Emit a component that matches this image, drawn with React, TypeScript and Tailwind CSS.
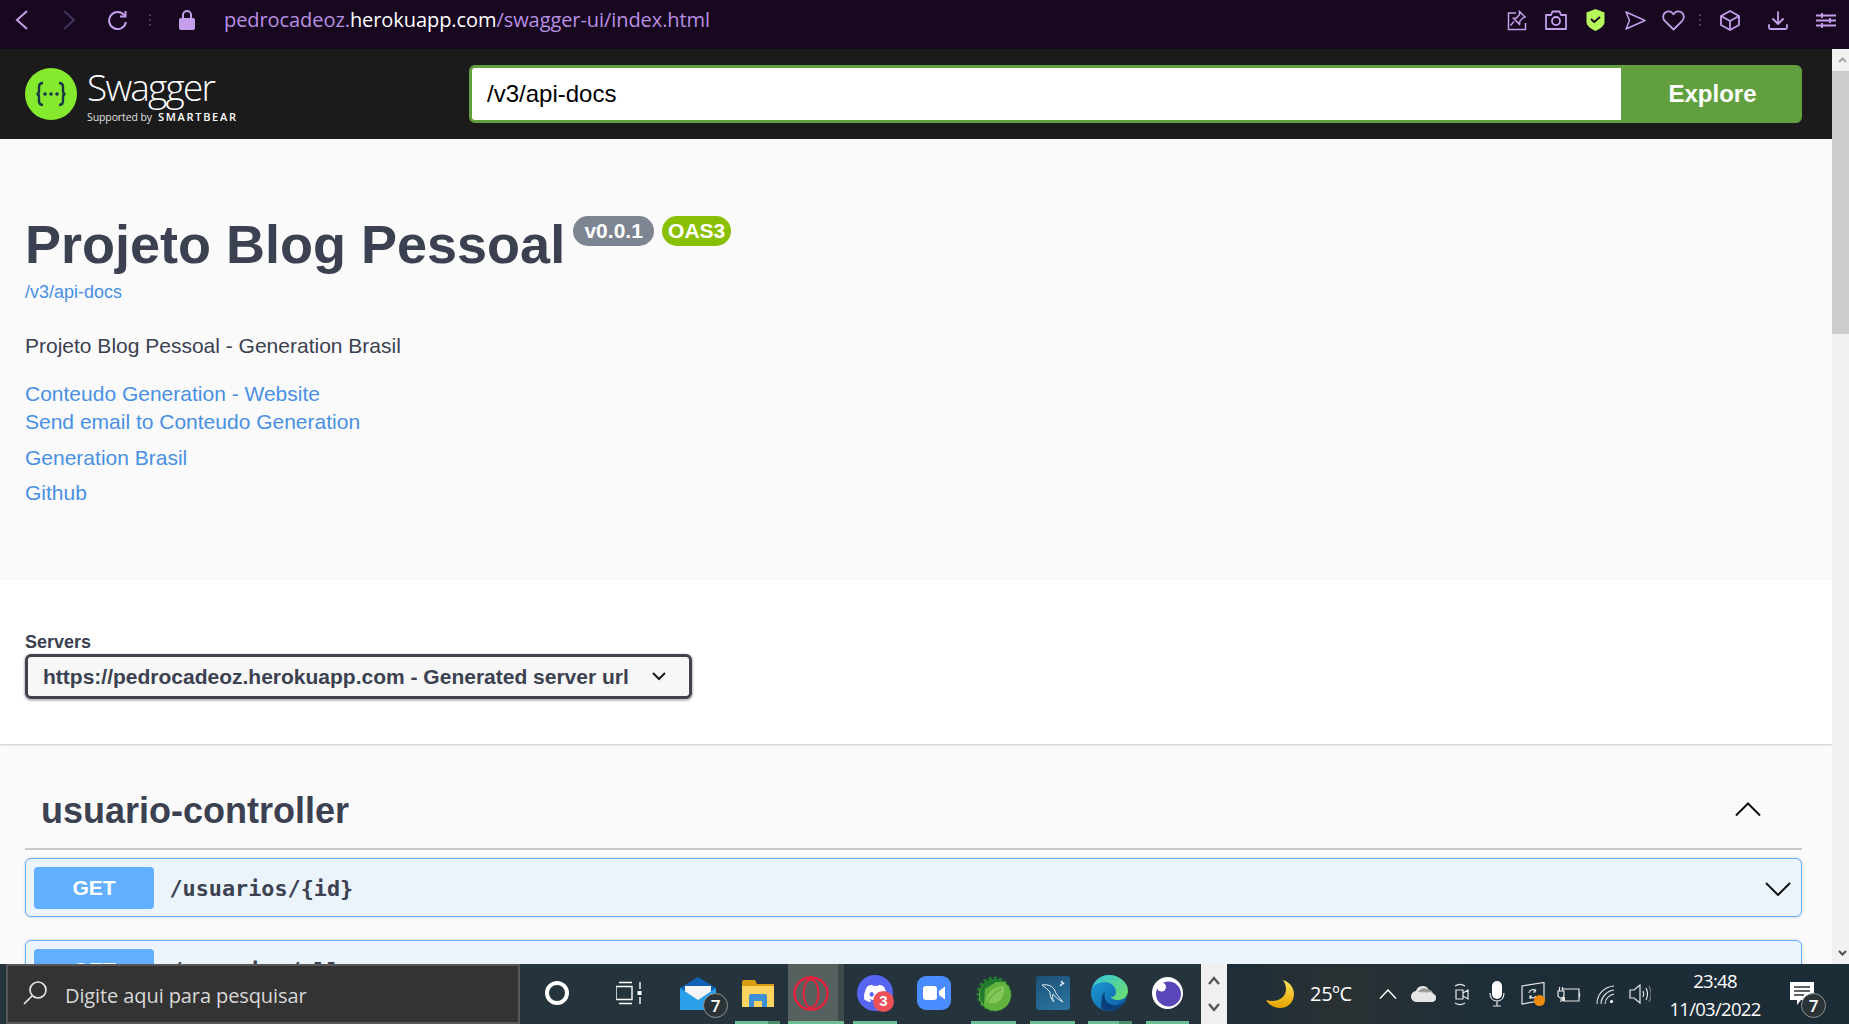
import React from "react";
import { FaDiscord } from "react-icons/fa";

const P = "#c59fec";

function Slot({ w, bar, dark, children, cls = "" }: { w: string; bar?: boolean; dark?: string; children?: React.ReactNode; cls?: string }) {
  return (
    <div className={`relative h-full flex items-center justify-center shrink-0 ${w} ${cls}`}>
      {children}
      {bar && (
        <div className="absolute bottom-0 left-0 right-0 h-[3px] flex bg-[#6fbd95]">
          <div className="flex-1" />
          {dark && <div className={`${dark} bg-[#4f8f70]`} />}
        </div>
      )}
    </div>
  );
}

function CountBadge({ n }: { n: string }) {
  return (
    <div className="absolute w-[25px] h-[25px] rounded-full bg-[#2b3336] border border-[#8d9496] text-white flex items-center justify-center text-[17px] font-['Open_Sans',sans-serif] font-semibold">
      {n}
    </div>
  );
}

function Pin() {
  return (
    <svg width="20" height="21" viewBox="0 0 20 21" fill="none" stroke={P} strokeWidth="1.5">
      <path d="M9 3H1.500v16.500h17V13" />
      <path d="M12.500 1.500l5.500 5.500-2 .8-3.200 3.500-.3 3-6-6 3-.3 3-3.500z" />
      <path d="M7 11.500l-3.500 4" />
    </svg>
  );
}
function Camera() {
  return (
    <svg width="22" height="20" viewBox="0 0 22 20" fill="none" stroke={P} strokeWidth="1.8" strokeLinejoin="round">
      <path d="M1 5h5l1.500-3.500h7L16 5h5v14H1z" />
      <circle cx="11" cy="11" r="4" />
    </svg>
  );
}
function Shield() {
  return (
    <svg width="19" height="22" viewBox="0 0 19 22">
      <path d="M9.500 0L18.500 3.500V13C18.500 17 13 20.500 9.500 22 6 20.500.5 17 .5 13V3.500z" fill="#b7f75e" />
      <path d="M5 10l3.200 3 5.800-5" fill="none" stroke="#17071f" strokeWidth="2" />
    </svg>
  );
}
function Send() {
  return (
    <svg width="21" height="19" viewBox="0 0 21 19" fill="none" stroke={P} strokeWidth="1.5" strokeLinejoin="round">
      <path d="M1 1l19 8.500L1 18l3.500-8.500z" />
    </svg>
  );
}
function Heart() {
  return (
    <svg width="23" height="21" viewBox="0 0 23 21" fill="none" stroke={P} strokeWidth="1.8" strokeLinejoin="round">
      <path d="M11.500 19.500L3 11.200C.5 8.700.6 4.700 3 2.700 5.500.6 9.200 1 11.500 4.300 13.800 1 17.500.6 20 2.700c2.400 2 2.500 6 0 8.500z" />
    </svg>
  );
}
function Cube() {
  return (
    <svg width="20" height="21" viewBox="0 0 20 21" fill="none" stroke={P} strokeWidth="1.8" strokeLinejoin="round">
      <path d="M10 1l9 5v9l-9 5-9-5V6z" />
      <path d="M1 6l9 5 9-5M10 11v9" />
    </svg>
  );
}
function Download() {
  return (
    <svg width="20" height="19" viewBox="0 0 20 19" fill="none" stroke={P} strokeWidth="1.8" strokeLinecap="round" strokeLinejoin="round">
      <path d="M10 1v11M5 8l5 5 5-5" />
      <path d="M1 14v2.500c0 1 .6 1.500 1.500 1.500h15c.9 0 1.500-.5 1.500-1.500V14" />
    </svg>
  );
}
function Sliders() {
  return (
    <svg width="20" height="17" viewBox="0 0 20 17" fill="none" stroke={P} strokeWidth="1.8">
      <path d="M0 3.500h20M0 8.500h20M0 13.500h20" />
      <path d="M6 1v5M14 6v5M6 11v5" />
    </svg>
  );
}
function Dots({ color }: { color: string }) {
  return (
    <div className="flex flex-col gap-[3px]">
      {[0, 1, 2].map((i) => (
        <div key={i} className={`w-[2px] h-[2px] ${color}`} />
      ))}
    </div>
  );
}

function BrowserBar() {
  return (
    <div className="h-[49px] shrink-0 bg-[#17071f] flex items-center pb-[9px]">
      <svg className="ml-[15px]" width="14" height="20" viewBox="0 0 14 20" fill="none" stroke={P} strokeWidth="2"><path d="M12 1L2 10l10 9" /></svg>
      <svg className="ml-[33px]" width="14" height="20" viewBox="0 0 14 20" fill="none" stroke="#45355f" strokeWidth="2"><path d="M2 1l10 9-10 9" /></svg>
      <svg className="ml-[31px]" width="21" height="21" viewBox="0 0 21 21" fill="none" stroke={P} strokeWidth="2">
        <path d="M17.500 5.500A8.500 8.500 0 1 0 19 12" />
        <path d="M18.500 1v5.500H13" />
      </svg>
      <div className="ml-[21px]"><Dots color="bg-[#4a3b57]" /></div>
      <svg className="ml-[28px]" width="16" height="20" viewBox="0 0 16 20">
        <rect x="0" y="8" width="16" height="12" rx="2" fill={P} />
        <path d="M4 9V5a4 4 0 0 1 8 0v4" fill="none" stroke={P} strokeWidth="2" />
      </svg>
      <div className="ml-[29px] text-[20px] font-['Open_Sans',sans-serif] text-[#b98fe3] whitespace-nowrap tracking-[-0.07px]">
        pedrocadeoz.<span className="text-white">herokuapp.com</span>/swagger-ui/index.html
      </div>
      <div className="flex-1" />
      <Pin />
      <div className="ml-[18px]"><Camera /></div>
      <div className="ml-[19px]"><Shield /></div>
      <div className="ml-[20px]"><Send /></div>
      <div className="ml-[16px]"><Heart /></div>
      <div className="ml-[14px]"><Dots color="bg-[#4a3b57]" /></div>
      <div className="ml-[19px]"><Cube /></div>
      <div className="ml-[28px]"><Download /></div>
      <div className="ml-[28px] mr-[13px]"><Sliders /></div>
    </div>
  );
}

function SwaggerHeader() {
  return (
    <div className="h-[90px] shrink-0 bg-[#1b1b1b] flex items-center pl-[25px] pr-[30px]">
      <div className="w-[444px] shrink-0 flex items-center">
        <svg width="52" height="52" viewBox="0 0 52 52">
          <circle cx="26" cy="26" r="26" fill="#85ea2d" />
          <path d="M18 15c-3 0-4 1.500-4 4v4c0 2-1 3-2.500 3 1.500 0 2.500 1 2.500 3v4c0 2.500 1 4 4 4" fill="none" stroke="#173647" strokeWidth="2.400" />
          <path d="M34 15c3 0 4 1.500 4 4v4c0 2 1 3 2.500 3-1.500 0-2.500 1-2.500 3v4c0 2.500-1 4-4 4" fill="none" stroke="#173647" strokeWidth="2.400" />
          <circle cx="20" cy="26" r="1.800" fill="#173647" />
          <circle cx="26" cy="26" r="1.800" fill="#173647" />
          <circle cx="32" cy="26" r="1.800" fill="#173647" />
        </svg>
        <div className="ml-[10px] flex flex-col text-white font-['Open_Sans',sans-serif]">
          <div className="text-[37px] leading-[38px] font-light tracking-[-1.8px] mt-[3px]">Swagger</div>
          <div className="flex items-baseline mt-[5px] leading-[12px]">
            <span className="text-[10.500px] tracking-[-0.1px] text-[#e0e0e0]">Supported by</span>
            <span className="ml-[6px] text-[11px] font-semibold tracking-[1.700px]">SMARTBEAR</span>
          </div>
        </div>
      </div>
      <div className="flex-1 h-[58px] flex border-[3px] border-[#62a03f] rounded-[6px] bg-[#62a03f] font-['Liberation_Sans',sans-serif]">
        <div className="flex-1 bg-white rounded-l-[3px] flex items-center pl-[15px] text-[24px] text-black">/v3/api-docs</div>
        <div className="w-[178px] flex items-center justify-center pl-[5px] text-white text-[24px] font-bold">Explore</div>
      </div>
    </div>
  );
}

function Info() {
  const link = "text-[21px] leading-[28px] text-[#4990e2]";
  return (
    <div className="h-[441px] bg-[#fafafa] pl-[25px] pt-[74px] text-[#3b4151]">
      <div className="flex items-start">
        <div className="text-[54px] leading-[62px] font-bold whitespace-nowrap">Projeto Blog Pessoal</div>
        <div className="ml-[8px] mt-[3px] h-[30px] w-[81px] rounded-full bg-[#7d8492] text-white text-[21px] font-bold flex items-center justify-center">v0.0.1</div>
        <div className="ml-[8px] mt-[3px] h-[30px] w-[69px] rounded-full bg-[#89bf04] text-white text-[21px] font-bold flex items-center justify-center">OAS3</div>
      </div>
      <div className="mt-[5px] text-[18px] leading-[24px] text-[#4990e2]">/v3/api-docs</div>
      <div className="mt-[28px] text-[21px] leading-[28px]">Projeto Blog Pessoal - Generation Brasil</div>
      <div className={`mt-[20px] ${link}`}>Conteudo Generation - Website</div>
      <div className={link}>Send email to Conteudo Generation</div>
      <div className={`mt-[8px] ${link}`}>Generation Brasil</div>
      <div className={`mt-[7px] ${link}`}>Github</div>
    </div>
  );
}

function Servers() {
  return (
    <div className="h-[164px] shrink-0 bg-white pl-[25px] pt-[50px] shadow-[0_1px_2px_rgba(0,0,0,0.2)] relative text-[#3b4151]">
      <div className="text-[18px] leading-[24px] font-bold">Servers</div>
      <div className="w-[667px] h-[45px] border-[3px] border-[#41444e] rounded-[6px] bg-[#f7f7f7] shadow-[0_1px_2px_1px_rgba(0,0,0,0.25)] flex items-center pl-[15px] text-[21px] font-bold">
        <span className="whitespace-nowrap">https://pedrocadeoz.herokuapp.com - Generated server url</span>
        <svg className="ml-[23px]" width="14" height="9" viewBox="0 0 14 9" fill="none" stroke="#1b1b1b" strokeWidth="2"><path d="M1 1l6 6 6-6" /></svg>
      </div>
    </div>
  );
}

function Op({ path, top }: { path: string; top: string }) {
  return (
    <div className={`ml-[25px] mr-[30px] ${top} h-[59px] shrink-0 border-[1.5px] border-[#61affe] rounded-[6px] bg-[#ebf3fb] shadow-[0_0_3px_rgba(0,0,0,0.19)] flex items-center pl-[7.5px] pr-[10px]`}>
      <div className="w-[120px] h-[42px] rounded-[4px] bg-[#61affe] text-white text-[21px] font-bold flex items-center justify-center pl-[1px]">GET</div>
      <div className="ml-[16px] pt-[3px] font-['DejaVu_Sans_Mono',monospace] text-[21.800px] font-semibold text-[#3b4151]">{path}</div>
      <div className="flex-1" />
      <svg className="mt-[3px]" width="26" height="14" viewBox="0 0 26 14" fill="none" stroke="#111" strokeWidth="2"><path d="M1 1l12 12L25 1" /></svg>
    </div>
  );
}

function Scrollbar() {
  return (
    <div className="w-[17px] shrink-0 bg-[#f1f1f1] flex flex-col">
      <div className="h-[22px] shrink-0 flex items-center justify-end pr-[2px] bg-[#f1f1f1]">
        <svg width="9" height="6" viewBox="0 0 9 6" fill="none" stroke="#a3a3a3" strokeWidth="2"><path d="M1 5l3.500-3.500L8 5" /></svg>
      </div>
      <div className="h-[263px] shrink-0 bg-[#cdcdcd]" />
      <div className="flex-1" />
      <div className="h-[22px] shrink-0 flex items-center justify-end pr-[2px]">
        <svg width="9" height="6" viewBox="0 0 9 6" fill="none" stroke="#505050" strokeWidth="2"><path d="M1 1l3.500 3.500L8 1" /></svg>
      </div>
    </div>
  );
}

function Mail() {
  return (
    <svg width="36" height="33" viewBox="0 0 36 33">
      <path d="M18 0L36 11v21H0V11z" fill="#1062b8" />
      <path d="M5 9h26v16H5z" fill="#f4f4f4" />
      <path d="M0 11l18 12 18-12v22H0z" fill="#2aa0ea" />
    </svg>
  );
}
function Folder() {
  return (
    <svg width="32" height="27" viewBox="0 0 32 27">
      <path d="M0 2a2 2 0 0 1 2-2h11l2 4h17v23H0z" fill="#d99d12" />
      <path d="M0 6h32v21H0z" fill="#fed35f" />
      <path d="M7 27V16a2 2 0 0 1 2-2h14a2 2 0 0 1 2 2v11h-5v-6h-8v6z" fill="#3f8fd6" />
    </svg>
  );
}
function Opera() {
  return (
    <svg width="36" height="35" viewBox="0 0 36 35" fill="none" stroke="#e8213f">
      <ellipse cx="18" cy="17.500" rx="16.500" ry="16" strokeWidth="2.400" />
      <ellipse cx="18" cy="17.500" rx="7.500" ry="14" strokeWidth="2" />
    </svg>
  );
}
function ZoomIcon() {
  return (
    <div className="w-[34px] h-[34px] rounded-[9px] bg-[#4a8cff] flex items-center justify-center">
      <svg width="22" height="14" viewBox="0 0 22 14" fill="#fff">
        <rect x="0" y="0" width="14" height="14" rx="3" />
        <path d="M16 5l6-4.500v13L16 9z" />
      </svg>
    </div>
  );
}
function Spring() {
  return (
    <svg width="36" height="37" viewBox="0 0 36 37">
      <circle cx="18" cy="19" r="15" fill="none" stroke="#217a2d" strokeWidth="5" strokeDasharray="3 2" />
      <circle cx="19" cy="20" r="16" fill="#62b33e" />
      <path d="M4 19A15 15 0 0 1 28 7L20 7 9 14 8 30C5 27 4 23 4 19z" fill="#217a2d" />
      <path d="M10 27c0-9 7-15 18-16 1 9-3 17-11 17-3 0-5-.5-7-1z" fill="#a4d772" opacity=".55" />
      <path d="M11 28c3-7 8-11 14-14" stroke="#62b33e" fill="none" strokeWidth="1.500" />
    </svg>
  );
}
function MySql() {
  return (
    <div className="w-[34px] h-[34px] rounded-[3px] bg-[linear-gradient(160deg,#1d5178,#2b76a3)] flex items-center justify-center">
      <svg width="30" height="30" viewBox="0 0 30 30" fill="none" stroke="#e6eef3" strokeWidth="1">
        <path d="M4 7c6-1 11 1 13 6 1 3 3 5 8 11-4-2-8-5-10-8-1 3 0 6 1 8-3-3-4-6-4-10C10 11 7 10 4 7z" />
        <path d="M23 3l3 3M22 8l3-3" strokeWidth="1.500" />
      </svg>
    </div>
  );
}
function Edge() {
  return (
    <svg width="38" height="36" viewBox="0 0 38 36">
      <defs>
        <linearGradient id="e1" x1="0" y1="0" x2="1" y2="1"><stop offset="0" stopColor="#1fa0d8" /><stop offset="1" stopColor="#0c59a4" /></linearGradient>
        <linearGradient id="e2" x1="0" y1="0" x2="1" y2="1"><stop offset="0" stopColor="#36c5d4" /><stop offset="1" stopColor="#6fe06a" /></linearGradient>
      </defs>
      <circle cx="18" cy="18" r="18" fill="url(#e1)" />
      <path d="M1 13C4 5 10 0 18 0c10 0 19 7 19 16 0 5-4 9-10 9-4 0-7-2-7-3 3 0 5-2 5-5 0-6-6-10-11-10-5 0-10 2-13 6z" fill="url(#e2)" />
      <path d="M14 16c-2 6 1 13 8 14 4 1 9-1 12-4-3 6-9 10-16 10-3 0-6-1-8-3 1-8 0-12 4-17z" fill="#0b3f7a" />
    </svg>
  );
}
function Eye() {
  return (
    <svg width="31" height="32" viewBox="0 0 31 32">
      <ellipse cx="15.500" cy="16" rx="15.500" ry="16" fill="#fff" />
      <circle cx="16.500" cy="17" r="12.500" fill="#5a46b8" />
      <circle cx="9.500" cy="10" r="4.500" fill="#fff" />
    </svg>
  );
}

function Taskbar() {
  return (
    <div className="h-[60px] shrink-0 flex bg-[#25343c] overflow-hidden">
      <div className="ml-[6px] w-[514px] h-full shrink-0 bg-[#333333] border-2 border-[#575757] flex items-center">
        <svg className="ml-[15px] mb-[3px]" width="25" height="25" viewBox="0 0 25 25" fill="none" stroke="#e8e8e8" strokeWidth="1.700">
          <circle cx="15" cy="10" r="8" />
          <path d="M9 16L1 24" />
        </svg>
        <span className="ml-[17px] mt-[3px] text-[20px] text-[#d8d8d8] font-['Open_Sans',sans-serif] tracking-[-0.1px] whitespace-nowrap">Digite aqui para pesquisar</span>
      </div>
      <Slot w="w-[73px]" cls="pb-[2px]">
        <div className="w-[24px] h-[24px] rounded-full border-[4px] border-white" />
      </Slot>
      <Slot w="w-[71px]" cls="pb-[2px]">
        <svg width="26" height="24" viewBox="0 0 26 24" fill="none" stroke="#fff" strokeWidth="1.400">
          <path d="M0 5.500h16v13H0zM3 1.500h13M3 22.500h13M24 1v7M24 16v7" />
          <rect x="21.500" y="10" width="4" height="4" fill="#fff" stroke="none" />
        </svg>
      </Slot>
      <Slot w="w-[71px]" cls="pb-[2px]">
        <div className="mr-[4px]"><Mail /></div>
        <div className="absolute left-[39px] top-[29px]"><CountBadge n="7" /></div>
      </Slot>
      <Slot w="w-[45px]" bar dark="w-[12px]" cls="pb-[2px]"><Folder /></Slot>
      <div className="w-[8px] shrink-0" />
      <Slot w="w-[56px]" bar cls="bg-[#55605f] pb-[2px]">
        <div className="mr-[11px]"><Opera /></div>
        <div className="absolute top-0 bottom-0 right-0 w-[6px] bg-[#3d4a4c]" />
      </Slot>
      <div className="w-[9px] shrink-0" />
      <Slot w="w-[44px]" bar cls="pb-[2px]">
        <div className="w-[36px] h-[36px] rounded-full bg-[#5865f2] flex items-center justify-center text-white">
          <FaDiscord size={25} />
        </div>
        <div className="absolute left-[20px] top-[27px] w-[21px] h-[21px] rounded-full bg-[#ed5157] text-white text-[15px] font-bold flex items-center justify-center">3</div>
      </Slot>
      <div className="w-[15px] shrink-0" />
      <Slot w="w-[44px]" cls="pb-[2px]"><ZoomIcon /></Slot>
      <div className="w-[15px] shrink-0" />
      <Slot w="w-[45px]" bar cls="pb-[2px]"><Spring /></Slot>
      <div className="w-[14px] shrink-0" />
      <Slot w="w-[45px]" bar cls="pb-[2px]"><MySql /></Slot>
      <div className="w-[13px] shrink-0" />
      <Slot w="w-[44px]" bar dark="w-[13px]" cls="pb-[2px]"><Edge /></Slot>
      <div className="w-[14px] shrink-0" />
      <Slot w="w-[43px]" bar cls="pb-[2px]"><Eye /></Slot>
      <div className="w-[12px] shrink-0" />
      <div className="w-[26px] h-full shrink-0 bg-[#f0f0f0] flex flex-col items-center justify-between py-[12px]">
        <svg width="12" height="9" viewBox="0 0 12 9" fill="none" stroke="#555" strokeWidth="2.400"><path d="M1 8l5-6 5 6" /></svg>
        <svg width="12" height="9" viewBox="0 0 12 9" fill="none" stroke="#555" strokeWidth="2.400"><path d="M1 1l5 6 5-6" /></svg>
      </div>
      <Tray />
    </div>
  );
}

function Tray() {
  const stroke = "#e8e8e8";
  return (
    <div className="flex-1 h-full bg-[linear-gradient(90deg,#1d2d38,#2a3133_18%,#1e2e38_40%,#1c2c37)] flex items-center text-white font-['Open_Sans',sans-serif]">
      <svg className="ml-[39px]" width="28" height="28" viewBox="0 0 28 28">
        <defs><linearGradient id="m" x1="0" y1="0" x2="0" y2="1"><stop offset="0" stopColor="#ffe15c" /><stop offset="1" stopColor="#e6a300" /></linearGradient></defs>
        <path d="M17 0c7 2 11 8 11 14 0 8-6 14-14 14-6 0-11-3-14-8 9 3 20-1 20-11 0-3-1-6-3-9z" fill="url(#m)" />
      </svg>
      <span className="ml-[16px] text-[20px] tracking-[-0.3px] w-[52px] whitespace-nowrap">25ºC</span>
      <svg className="ml-[17px]" width="18" height="10" viewBox="0 0 18 10" fill="none" stroke="#fff" strokeWidth="1.400"><path d="M1 9.500l8-8.500 8 8.500" /></svg>
      <svg className="ml-[14px]" width="26" height="16" viewBox="0 0 26 16">
        <path d="M6 16a5.500 5.500 0 0 1-1-11 7 7 0 0 1 13-1 5 5 0 0 1 4 3.500A4.500 4.500 0 0 1 22 16z" fill="#e6e6e6" />
        <path d="M7 6a7 7 0 0 1 11-2 5 5 0 0 1 4 3.500 6 6 0 0 0-6-1z" fill="#9a9a9a" />
      </svg>
      <svg className="ml-[17px]" width="16" height="23" viewBox="0 0 16 23" fill="none" stroke={stroke} strokeWidth="1.200">
        <path d="M2 7h7v9H2zM9 10l5-3v9l-5-3z" />
        <path d="M1 3c3-2 7-2 10 0M1 20c3 2 7 2 10 0" />
      </svg>
      <svg className="ml-[19px]" width="16" height="26" viewBox="0 0 16 26">
        <rect x="3" y="0" width="10" height="18" rx="5" fill="#fff" />
        <path d="M1 12c0 5 3 8 7 8s7-3 7-8M8 20v5M4 25h8" fill="none" stroke={stroke} strokeWidth="1.200" />
      </svg>
      <div className="relative ml-[16px] w-[24px] h-[24px]">
        <svg width="24" height="23" viewBox="0 0 24 23" fill="none" stroke={stroke} strokeWidth="1.200">
          <path d="M1 4l22-3.500V18L1 22z" />
          <path d="M8 11a4 4 0 0 1 7-2M15 14a4 4 0 0 1-6 1M14 7v3h-2M9 17v-3h2" />
        </svg>
        <div className="absolute left-[13px] top-[13px] w-[11px] h-[11px] rounded-full bg-[#f08a0c]" />
      </div>
      <svg className="ml-[12px]" width="24" height="17" viewBox="0 0 24 17" fill="none" stroke={stroke} strokeWidth="1.200">
        <path d="M6 3h16v12H6M22.500 7v4" />
        <path d="M1 5h6v4a3 3 0 0 1-6 0zM2.500 1v4M5.500 1v4M4 12v4" />
        <rect x="5" y="11" width="3" height="4" fill={stroke} stroke="none" />
      </svg>
      <svg className="ml-[15px]" width="19" height="19" viewBox="0 0 19 19" fill="none" stroke={stroke} strokeWidth="1.100">
        <path d="M1 19C1 9 8 2 18 1M5 19c0-7 6-13 13-14M9 19c0-5 4-9 9-10" />
        <circle cx="15.500" cy="16.500" r="1.600" fill="#fff" stroke="none" />
      </svg>
      <svg className="ml-[14px]" width="22" height="20" viewBox="0 0 22 20" fill="none" stroke={stroke} strokeWidth="1.200">
        <path d="M1 6h4l6-5v18l-6-5H1z" />
        <path d="M14 7c1 2 1 4 0 6M17 4c2 4 2 8 0 12" />
        <path d="M20 2c2.500 5 2.500 11 0 16" stroke="#777" />
      </svg>
      <div className="ml-[18px] w-[92px] flex flex-col items-center text-[18.500px] leading-[28px] tracking-[-0.7px] whitespace-nowrap mt-[2px]">
        <span>23:48</span>
        <span>11/03/2022</span>
      </div>
      <div className="relative ml-[29px] w-[24px] h-[24px]">
        <svg width="24" height="28" viewBox="0 0 24 28">
          <path d="M0 0h24v18H11l-4 5v-5H0z" fill="#fff" />
          <path d="M4 5h16M4 9h16M4 13h10" stroke="#2b3336" strokeWidth="1.400" />
        </svg>
        <div className="absolute left-[11px] top-[11px]"><CountBadge n="7" /></div>
      </div>
    </div>
  );
}

export default function App() {
  return (
    <div className="w-[1849px] h-[1024px] overflow-hidden flex flex-col font-['Liberation_Sans',sans-serif]">
      <BrowserBar />
      <div className="h-[915px] shrink-0 flex overflow-hidden">
        <div className="flex-1 flex flex-col overflow-hidden">
          <SwaggerHeader />
          <Info />
          <Servers />
          <div className="flex-1 flex flex-col bg-[#fafafa] overflow-hidden">
            <div className="ml-[25px] mr-[30px] h-[106px] shrink-0 border-b-2 border-[#c9c9c9] pt-[45px] pl-[16px] pr-[41px] flex items-start justify-between text-[#3b4151]">
              <div className="text-[36px] leading-[44px] font-bold">usuario-controller</div>
              <svg className="mt-[13px]" width="26" height="14" viewBox="0 0 26 14" fill="none" stroke="#111" strokeWidth="2"><path d="M1 13.500L13 1.500l12 12" /></svg>
            </div>
            <Op path="/usuarios/{id}" top="mt-[8px]" />
            <Op path="/usuarios/all" top="mt-[23px]" />
          </div>
        </div>
        <Scrollbar />
      </div>
      <Taskbar />
    </div>
  );
}
